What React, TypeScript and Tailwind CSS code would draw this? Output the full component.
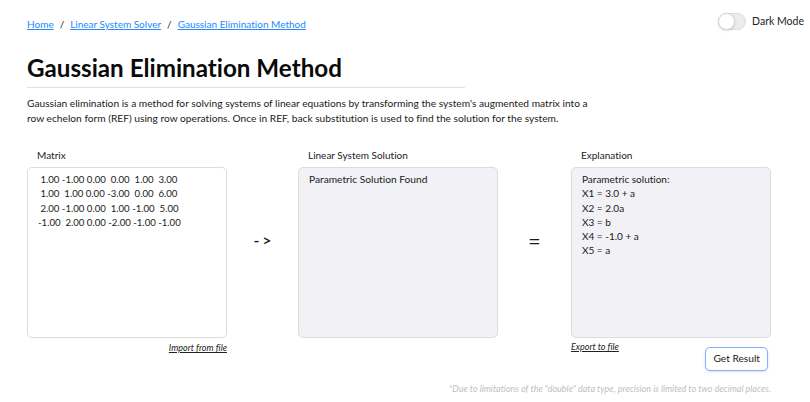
import React from "react";

const font = { fontFamily: 'Lato, "Open Sans", sans-serif' };

const matrixRows = [
  " 1.00 -1.00 0.00  0.00  1.00  3.00",
  " 1.00  1.00 0.00 -3.00  0.00  6.00",
  " 2.00 -1.00 0.00  1.00 -1.00  5.00",
  "-1.00  2.00 0.00 -2.00 -1.00 -1.00",
];

const explanation = [
  "Parametric solution:",
  "X1 = 3.0 + a",
  "X2 = 2.0a",
  "X3 = b",
  "X4 = -1.0 + a",
  "X5 = a",
];

export default function App() {
  return (
    <div className="w-[810px] h-[402px] bg-white text-[#1a1a1a] overflow-hidden [font-variant-ligatures:none]" style={font}>
      <div className="pl-[27px] pr-[7px] pt-[14px]">
        {/* Header */}
        <div className="flex items-start justify-between h-[20px]">
          <nav className="flex items-center gap-[6px] text-[10px] mt-[3px]">
            <a className="text-[#2188ff] underline">Home</a>
            <span className="text-[#222]">/</span>
            <a className="text-[#2188ff] underline">Linear System Solver</a>
            <span className="text-[#222]">/</span>
            <a className="text-[#2188ff] underline">Gaussian Elimination Method</a>
          </nav>
          <div className="flex items-center gap-[6px] mt-[-1px] mr-[-1px]">
            <div className="relative w-[28px] h-[17px] rounded-full bg-[#ececec] border border-[#dcdcdc]">
              <div className="absolute left-[-1px] top-[-1px] w-[17px] h-[17px] rounded-full bg-white border border-[#d4d4d4] shadow-sm" />
            </div>
            <span className="text-[10.5px] text-[#222]">Dark Mode</span>
          </div>
        </div>

        {/* Title */}
        <h1 className="mt-[17px] text-[24.2px] leading-[34px] font-bold text-[#0a0a0a] w-[438px] border-b border-[#e0e0e0] pb-[2px]">
          Gaussian Elimination Method
        </h1>

        <p className="mt-[8px] text-[10.2px] leading-[15px] text-[#1a1a1a] w-[572px]">
          Gaussian elimination is a method for solving systems of linear equations by transforming the system's augmented matrix into a row echelon form (REF) using row operations. Once in REF, back substitution is used to find the solution for the system.
        </p>

        {/* Panels */}
        <div className="mt-[22px] flex items-start">
          <div className="w-[200px] flex flex-col">
            <div className="pl-[10px] text-[10px] leading-[14px] text-[#222]">Matrix</div>
            <div className="mt-[5px] h-[171px] rounded-[5px] border border-[#dcdcdc] bg-white pl-[10px] pt-[5px] text-[9.6px] leading-[14.3px] text-[#1a1a1a] whitespace-pre">
              {matrixRows.map((r, i) => (
                <div key={i}>{r}</div>
              ))}
            </div>
            <div className="mt-[3px] self-end text-[9px] italic underline text-[#222]">Import from file</div>
          </div>

          <div className="w-[71px] flex justify-center pt-[80px] text-[16px] font-semibold text-[#1a1a1a] tracking-[3px] pl-[3px]">
            -&gt;
          </div>

          <div className="w-[200px] flex flex-col">
            <div className="pl-[10px] text-[10px] leading-[14px] text-[#222]">Linear System Solution</div>
            <div className="mt-[5px] h-[171px] rounded-[5px] border border-[#dcdcdc] bg-[#f1f1f6] pl-[10px] pt-[4px] text-[10.2px] leading-[14.3px] text-[#1a1a1a]">
              Parametric Solution Found
            </div>
          </div>

          <div className="w-[73px] flex justify-center pt-[76px] text-[22px] text-[#1a1a1a]">=</div>

          <div className="w-[200px] flex flex-col">
            <div className="pl-[10px] text-[10px] leading-[14px] text-[#222]">Explanation</div>
            <div className="mt-[5px] h-[171px] rounded-[5px] border border-[#dcdcdc] bg-[#f1f1f6] pl-[10px] pt-[4px] text-[10px] leading-[14.3px] text-[#1a1a1a]">
              {explanation.map((l, i) => (
                <div key={i}>{l}</div>
              ))}
            </div>
            <div className="flex items-start justify-between">
              <div className="mt-[2px] text-[9px] italic underline text-[#222]">Export to file</div>
              <button className="mt-[9px] mr-[3px] h-[24px] px-[7px] rounded-[5px] border-[1.5px] border-[#7fb3ff] bg-white text-[10.2px] text-[#1a1a1a] shadow-sm">
                Get Result
              </button>
            </div>
          </div>
        </div>

        <div className="w-[744px] text-right mt-[11px] text-[9px] italic text-[#c0c0c0]">
          *Due to limitations of the "double" data type, precision is limited to two decimal places.
        </div>
      </div>
    </div>
  );
}
